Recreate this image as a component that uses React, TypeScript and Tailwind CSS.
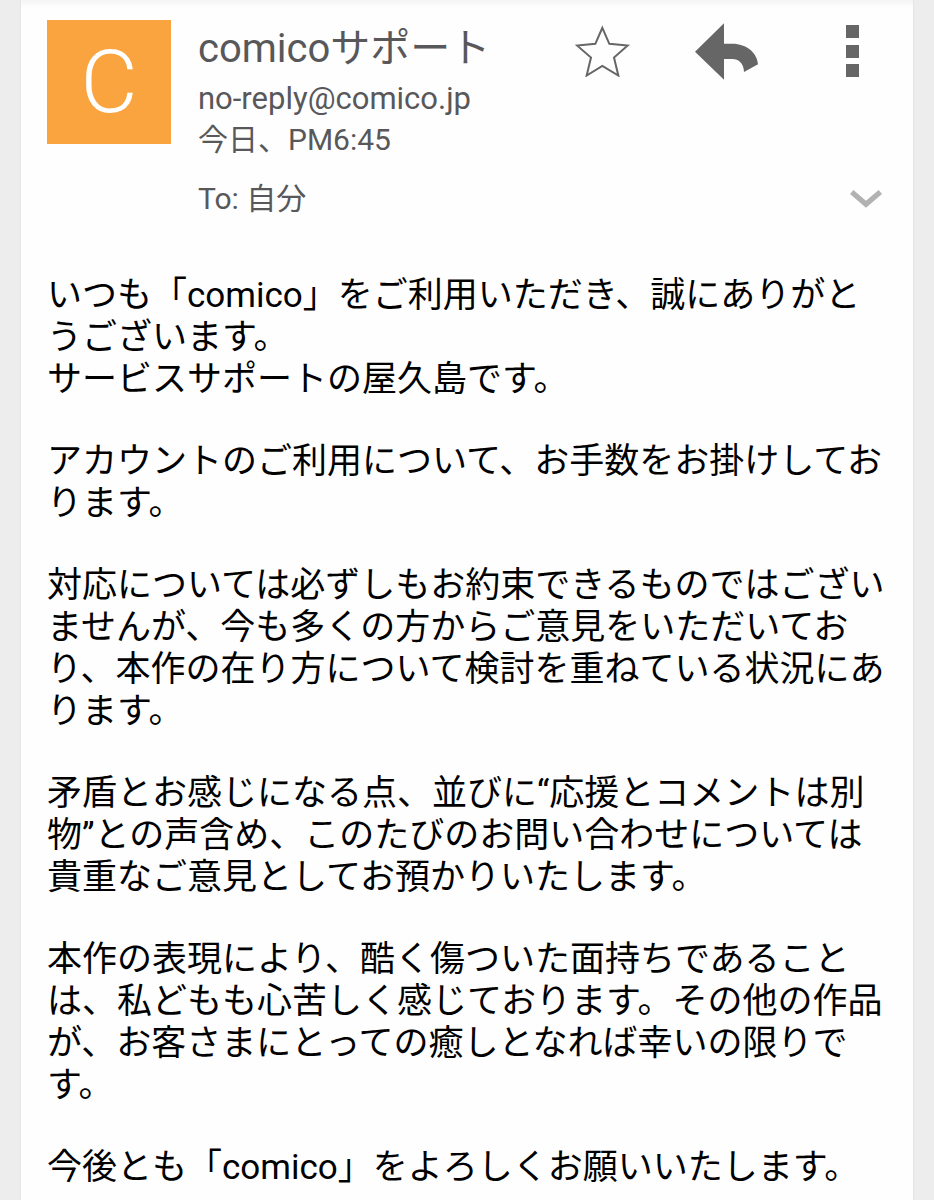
import { useState } from 'react';

const paragraphs = [
  ['いつも「comico」をご利用いただき、誠にありがとうございます。', 'サービスサポートの屋久島です。'],
  ['アカウントのご利用について、お手数をお掛けしております。'],
  ['対応については必ずしもお約束できるものではございませんが、今も多くの方からご意見をいただいており、本作の在り方について検討を重ねている状況にあります。'],
  ['矛盾とお感じになる点、並びに“応援とコメントは別物”との声含め、このたびのお問い合わせについては貴重なご意見としてお預かりいたします。'],
  ['本作の表現により、酷く傷ついた面持ちであることは、私どもも心苦しく感じております。その他の作品が、お客さまにとっての癒しとなれば幸いの限りです。'],
  ['今後とも「comico」をよろしくお願いいたします。'],
];

export default function App() {
  const [starred, setStarred] = useState(false);

  return (
    <div lang="ja" className="min-h-screen bg-[#ededed] px-[21px] font-['Roboto','Noto_Sans_CJK_JP',sans-serif]">
      <article className="min-h-screen bg-[#fefefe] shadow-[0_0_2px_rgba(0,0,0,0.1)]">
        <div className="h-2 bg-linear-to-b from-[#f4f4f4] to-[#fefefe]" />

        {/* Sender */}
        <header className="flex items-start gap-[27px] pl-[26px] pr-[31px] pt-3 text-[#58585a]">
          <div className="flex size-[124px] shrink-0 items-center justify-center bg-[#faa43f] text-[88px] font-light leading-none text-white">
            C
          </div>

          <div className="min-w-0 flex-1">
            <div className="flex items-start justify-between">
              <div>
                <h1 className="text-[40px] leading-[58px]">comicoサポート</h1>
                <p className="text-[31px] leading-[41px]">no-reply@comico.jp</p>
                <p className="text-[30px] leading-[41px]">今日、PM6:45</p>
              </div>
              <Actions starred={starred} onStar={() => setStarred(!starred)} />
            </div>
            <div className="mt-[18px] flex items-center justify-between">
              <p className="text-[30px] leading-[41px]">To: 自分</p>
              <button type="button" aria-label="詳細を表示" className="cursor-pointer">
                <svg viewBox="0 0 96 54" className="h-[18px] w-8" fill="none" stroke="#b2b2b2" strokeWidth="16">
                  <path d="M5 6 L48 43 L91 6" />
                </svg>
              </button>
            </div>
          </div>
        </header>

        {/* Message */}
        <div className="space-y-[40px] px-[26px] pb-3 pt-14 text-[35px] leading-[42px] text-black">
          {paragraphs.map((lines) => (
            <div key={lines[0]}>
              {lines.map((line) => (
                <p key={line}>{line}</p>
              ))}
            </div>
          ))}
        </div>
      </article>
    </div>
  );
}

function Actions({ starred, onStar }: { starred: boolean; onStar: () => void }) {
  return (
    <div className="flex h-[62px] shrink-0 items-center gap-16 text-[#666666]">
      <button type="button" aria-label="スター" aria-pressed={starred} onClick={onStar} className="flex w-14 cursor-pointer justify-center">
        <svg viewBox="0 0 165 155" className="h-[52px] w-[55px]" fill={starred ? '#f4b400' : 'none'} stroke="currentColor" strokeWidth="6">
          <path d="M82 8 L103 56 L158 61 L117 97 L130 151 L82 122 L35 151 L48 97 L6 61 L61 56 Z" />
        </svg>
      </button>
      <button type="button" aria-label="返信" className="flex w-16 cursor-pointer justify-center">
        <svg viewBox="0 0 189 171" className="h-[57px] w-[63px]" fill="currentColor">
          <path d="M0 86 L87 1 V62 H112 C155 62 187 90 189 124 L147 147 C146 120 131 108 112 108 H87 V170 Z" />
        </svg>
      </button>
      <button type="button" aria-label="その他" className="flex w-[60px] cursor-pointer justify-center">
        <svg viewBox="0 0 13 52" className="h-[52px] w-[13px]" fill="currentColor">
          <path d="M0 0 H13 V13 H0 Z M0 20 H13 V33 H0 Z M0 39 H13 V52 H0 Z" />
        </svg>
      </button>
    </div>
  );
}
